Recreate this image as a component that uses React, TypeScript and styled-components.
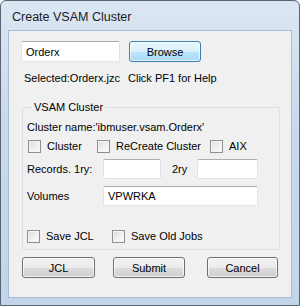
import React from 'react';
import styled, { createGlobalStyle } from 'styled-components';

const GlobalStyle = createGlobalStyle`
  html, body {
    margin: 0;
    padding: 0;
    background: #ffffff;
  }
`;

const Window = styled.div`
  box-sizing: border-box;
  width: 300px;
  height: 306px;
  display: flex;
  flex-direction: column;
  border: 1px solid #5b6571;
  border-radius: 6px 6px 0 0;
  background: linear-gradient(180deg, #dbe6f3 0%, #c9daec 40%, #c2d5ea 100%);
  font-family: 'Liberation Sans', Arial, sans-serif;
  color: #000;
`;

const TitleBar = styled.div`
  height: 29px;
  display: flex;
  align-items: center;
  padding: 3px 0 0 11px;
  box-sizing: border-box;
  font-size: 12.5px;
  color: #1b1b1b;
`;

const Client = styled.div`
  box-sizing: border-box;
  flex: 1;
  margin: 0 7px 7px 7px;
  border: 1px solid #a9bbd0;
  background: #f0f0f0;
  display: flex;
  flex-direction: column;
  padding-left: 12px;
  font-size: 11px;
`;

const Row = styled.div<{ $top?: number; $left?: number }>`
  display: flex;
  align-items: center;
  margin-top: ${(p) => p.$top ?? 0}px;
  padding-left: ${(p) => p.$left ?? 0}px;
`;

const TextBox = styled.div<{ $w: number; $h?: number }>`
  box-sizing: border-box;
  width: ${(p) => p.$w}px;
  height: ${(p) => p.$h ?? 20}px;
  background: #fff;
  border: 1px solid #e2e3ea;
  border-top-color: #abadb3;
  border-radius: 2px;
  display: flex;
  align-items: center;
  padding-left: 4px;
  font-size: 11px;
  flex-shrink: 0;
`;

const Button = styled.div<{ $w: number; $focus?: boolean }>`
  box-sizing: border-box;
  width: ${(p) => p.$w}px;
  height: 21px;
  flex-shrink: 0;
  border: 1px solid ${(p) => (p.$focus ? '#3c7fb1' : '#707070')};
  border-radius: 3px;
  background: ${(p) =>
    p.$focus
      ? 'linear-gradient(180deg, #eaf6fd 0%, #d9f0fc 50%, #bee6fd 51%, #a7d9f5 100%)'
      : 'linear-gradient(180deg, #f2f2f2 0%, #ebebeb 50%, #dddddd 51%, #cfcfcf 100%)'};
  box-shadow: inset 0 0 0 1px rgba(255, 255, 255, 0.7);
  display: flex;
  align-items: center;
  justify-content: center;
  font-size: 11px;
  color: #000;
`;

const Label = styled.span<{ $w?: number }>`
  display: inline-block;
  width: ${(p) => (p.$w ? `${p.$w}px` : 'auto')};
  flex-shrink: 0;
  line-height: 13px;
  white-space: nowrap;
`;

const Group = styled.fieldset`
  box-sizing: border-box;
  width: 258px;
  margin: 16px 0 0 1px;
  padding: 0 0 6px 4px;
  border: 1px solid #d5dfe5;
  border-radius: 3px;
  min-width: 0;
`;

const Legend = styled.legend`
  margin-left: 5px;
  padding: 0 2px;
  font-size: 11px;
  line-height: 13px;
`;

const Check = styled.label<{ $w?: number }>`
  display: flex;
  align-items: center;
  gap: 6px;
  width: ${(p) => (p.$w ? `${p.$w}px` : 'auto')};
  flex-shrink: 0;
  line-height: 13px;
  white-space: nowrap;
`;

const Box = styled.span`
  box-sizing: border-box;
  width: 13px;
  height: 13px;
  flex-shrink: 0;
  border: 1px solid #8e8f8f;
  background: linear-gradient(135deg, #dcdcdc 0%, #f2f2f2 60%, #fafafa 100%);
  box-shadow: inset 0 0 0 1px #f4f4f4;
`;

const ButtonRow = styled.div`
  display: flex;
  margin-top: 7px;
  padding-left: 1px;
`;

export default function App() {
  return (
    <>
      <GlobalStyle />
      <Window>
        <TitleBar>Create VSAM Cluster</TitleBar>
        <Client>
          <Row $top={10} style={{ gap: 9 }}>
            <TextBox $w={99} $h={21}>Orderx</TextBox>
            <Button $w={72} $focus>Browse</Button>
          </Row>
          <Row $top={10} $left={3}>
            <Label $w={104}>Selected:Orderx.jzc</Label>
            <Label>Click PF1 for Help</Label>
          </Row>
          <Group>
            <Legend>VSAM Cluster</Legend>
            <Row $top={7}>
              <Label>Cluster name:'ibmuser.vsam.Orderx'</Label>
            </Row>
            <Row $top={6} $left={1}>
              <Check $w={69}>
                <Box />
                Cluster
              </Check>
              <Check $w={113}>
                <Box />
                ReCreate Cluster
              </Check>
              <Check>
                <Box />
                AIX
              </Check>
            </Row>
            <Row $top={6}>
              <Label $w={76}>Records. 1ry:</Label>
              <TextBox $w={58} />
              <Label $w={25} style={{ marginLeft: 11 }}>2ry</Label>
              <TextBox $w={61} />
            </Row>
            <Row $top={7}>
              <Label $w={76}>Volumes</Label>
              <TextBox $w={155}>VPWRKA</TextBox>
            </Row>
            <Row $top={24} $left={-2}>
              <Check $w={85}>
                <Box />
                Save JCL
              </Check>
              <Check>
                <Box />
                Save Old Jobs
              </Check>
            </Row>
          </Group>
          <ButtonRow>
            <Button $w={73}>JCL</Button>
            <Button $w={72} style={{ marginLeft: 18 }}>Submit</Button>
            <Button $w={71} style={{ marginLeft: 22 }}>Cancel</Button>
          </ButtonRow>
        </Client>
      </Window>
    </>
  );
}
